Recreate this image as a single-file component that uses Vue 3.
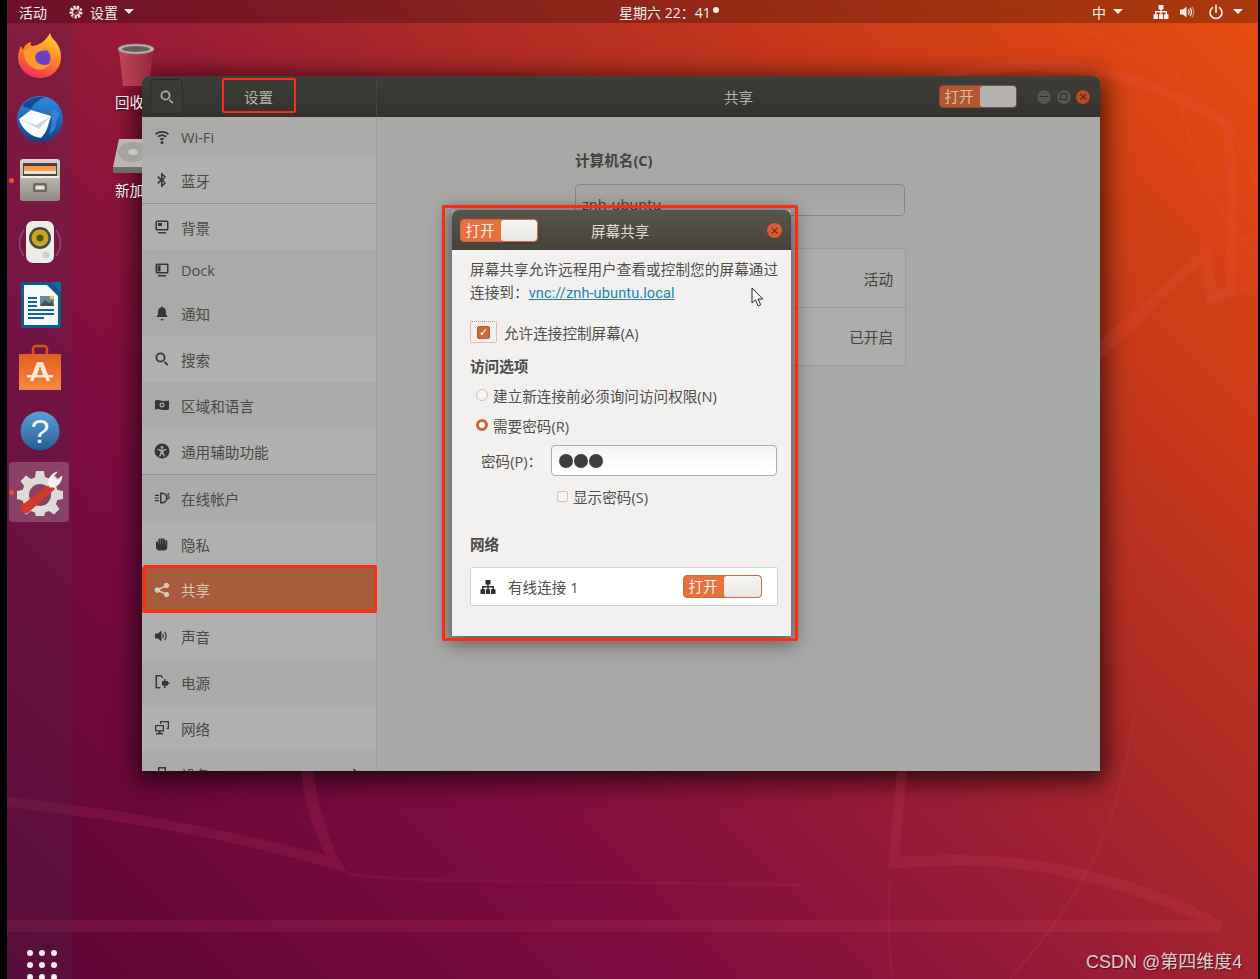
<template>
  <div class="screen">
    <div class="desktop">
      <!-- wallpaper curves -->
      <svg class="curves" viewBox="0 0 1260 979" width="1260" height="979">
        <g fill="#ff6478" fill-opacity="0.1">
          <path d="M0 920H1190L1222 922 1220 932H0Z" />
          <path d="M1222 922C1140 875 1040 855 960 855 935 855 915 856 899 857L908 760H898L888 869C920 866 960 864 990 866 1070 872 1140 895 1197 920Z" />
          <path d="M0 796C120 808 230 830 325 855 312 825 303 800 300 760H312C316 805 330 845 347 873 240 840 120 820 0 806Z" />
          <path d="M930 76C980 58 1050 55 1100 65 1150 78 1200 100 1233 122L1237 207 1236 295 1206 305 1202 262 1100 360V340L1210 243 1216 290 1226 287 1228 207 1223 128C1190 105 1150 88 1095 76 1050 68 980 70 930 82Z" />
        </g>
        <g fill="none" stroke="#ff6478" stroke-opacity="0.07" stroke-width="3">
          <path d="M1133 720C1125 790 1100 850 1085 875 1060 920 1035 950 1010 979" />
          <path d="M890 880C888 920 889 950 892 979" />
          <path d="M347 873C400 885 600 880 800 885" />
          <path d="M1000 0C1100 30 1180 70 1230 130 1245 150 1252 170 1258 190" />
          <path d="M1177 70C1180 130 1205 190 1228 220 1240 235 1250 250 1258 260" />
          <path d="M1226 250L1258 232" />
          <path d="M1206 300L1258 285" />
        </g>
      </svg>

      <header class="topbar">
        <span class="top-activities">活动</span>
        <svg class="top-gear" viewBox="0 0 16 16" width="16" height="16">
          <circle cx="8" cy="8" r="5" fill="none" stroke="#eee" stroke-width="3" stroke-dasharray="2.2 1.2" />
          <circle cx="8" cy="8" r="3.6" fill="none" stroke="#ddd" stroke-width="1.6" />
          <path d="M4 12.5L11 5l1.5 1.3L5.2 13.5z" fill="#c8402e" />
        </svg>
        <span class="top-app">设置</span>
        <i class="caret"></i>
        <span class="top-clock">星期六 22：41</span>
        <i class="clock-dot"></i>
        <span class="top-spacer"></span>
        <span class="top-ime">中</span>
        <i class="caret"></i>
        <svg class="top-net" viewBox="0 0 16 16" width="16" height="16">
          <path fill="#f2f2f2" d="M5.500 1h5v4.500H8.600V7H14v3.200h1.500V15h-4.500v-4.800h1.600V8.400H8.700v1.800h1.400V15H5.900v-4.800h1.400V8.400H3.400v1.800H5V15H.5v-4.800H2V7h5.300V5.500H5.500z" />
        </svg>
        <svg class="top-vol" viewBox="0 0 16 16" width="16" height="16">
          <path fill="#f2f2f2" d="M1 5.500h3L7.500 2.500v11L4 10.500H1z" />
          <path fill="none" stroke="#f2f2f2" stroke-width="1.2" d="M9.300 5.500c1 1.400 1 3.600 0 5M11 3.800c1.800 2.400 1.800 6 0 8.400" />
          <path fill="none" stroke="#f2f2f2" stroke-opacity="0.5" stroke-width="1.2" d="M12.800 2.600c2.400 3.200 2.400 7.600 0 10.800" />
        </svg>
        <svg class="top-power" viewBox="0 0 16 16" width="16" height="16">
          <path fill="none" stroke="#f4f4f4" stroke-width="1.6" stroke-linecap="round" d="M8 1.200v7M4.600 3.600a6 6 0 1 0 6.800 0" />
        </svg>
        <i class="caret"></i>
      </header>

      <nav class="dock">
        <div class="dock-item">
          <svg viewBox="0 0 48 48" width="48" height="48">
            <defs>
              <linearGradient id="fx1" x1="0.7" y1="0" x2="0.3" y2="1">
                <stop offset="0" stop-color="#ffd23a" />
                <stop offset="0.45" stop-color="#ff8a22" />
                <stop offset="1" stop-color="#f02a5c" />
              </linearGradient>
            </defs>
            <path fill="url(#fx1)" d="M34 2c1 4 3 6 6 9 3 4 5 9 5 15 0 12-9 21-21 21S2 38 2 26c0-5 2-9 3-11l2 4c1-4 4-7 8-8-1 3 0 4 2 4 6-1 13-5 17-13z" />
            <circle cx="24" cy="27" r="10.500" fill="#6a3fc4" />
            <path fill="#ff9a2c" d="M8 20c3-4 10-6 16-4 5 1 8 4 8 4-5-1-9 0-11 2-3 3-2 7 1 10 3 2 8 3 13 0-3 5-9 8-15 6-7-2-13-10-12-18z" />
          </svg>
        </div>
        <div class="dock-item">
          <svg viewBox="0 0 48 48" width="48" height="48">
            <defs>
              <linearGradient id="tb1" x1="0.5" y1="0" x2="0.5" y2="1">
                <stop offset="0" stop-color="#2f8fe0" />
                <stop offset="1" stop-color="#123f8c" />
              </linearGradient>
            </defs>
            <circle cx="24" cy="25" r="23" fill="url(#tb1)" />
            <path fill="#164a96" d="M6 12c5-7 16-11 24-9-6 2-12 6-15 12z" />
            <path fill="#fff" d="M3 25l12-9 20 6-4 13-2 4-4 5C16 43 6 36 3 25z" />
            <path fill="#cfd9e6" d="M3 25l17 6 15-9-12 13z" />
            <path fill="#3a7fd0" d="M36 14l8 5-3 7-2 9-6 6 3-12z" />
          </svg>
        </div>
        <div class="dock-item">
          <i class="run-dot"></i>
          <svg viewBox="0 0 48 48" width="48" height="48">
            <defs>
              <linearGradient id="cab1" x1="0" y1="0" x2="0" y2="1">
                <stop offset="0" stop-color="#dad6cf" />
                <stop offset="1" stop-color="#8f8b84" />
              </linearGradient>
            </defs>
            <rect x="4" y="3" width="40" height="42" rx="3" fill="url(#cab1)" />
            <rect x="7" y="7" width="34" height="13" fill="#4a4540" />
            <rect x="8" y="10" width="32" height="6" fill="#f59a4a" />
            <rect x="8" y="15" width="32" height="3" fill="#e8e2d4" />
            <rect x="5" y="20" width="38" height="2" fill="#f2efe9" />
            <rect x="17" y="27" width="14" height="9" rx="1.500" fill="#6e6a64" />
            <rect x="19.500" y="29.500" width="9" height="4" fill="#e5e2dc" />
          </svg>
        </div>
        <div class="dock-item">
          <svg viewBox="0 0 48 48" width="48" height="48">
            <path fill="none" stroke="#8a7ab0" stroke-opacity="0.55" stroke-width="1.500" d="M8 12c-6 8-6 18 0 26M40 12c6 8 6 18 0 26" />
            <rect x="10" y="3" width="28" height="42" rx="7" fill="#eeece6" />
            <circle cx="24" cy="20" r="11" fill="#4a4740" />
            <circle cx="24" cy="20" r="8.500" fill="#c8a818" />
            <circle cx="24" cy="20" r="3.500" fill="#5a5020" />
            <circle cx="30" cy="37" r="3.500" fill="#d2d0ca" />
          </svg>
        </div>
        <div class="dock-item">
          <svg viewBox="0 0 48 48" width="48" height="48">
            <path fill="#0f5c8c" d="M5 1h28l12 12v31a3 3 0 0 1-3 3H8a3 3 0 0 1-3-3z" />
            <path fill="#f5f7f8" d="M8 4h23l11 11v29H8z" />
            <path fill="#0f6aa0" d="M34 1h11v11z" />
            <path stroke="#1c6292" stroke-width="2" d="M12 17h9M12 21h9M12 25h9M12 29h26M12 33h26M12 37h16" />
            <rect x="24" y="15" width="14" height="10" fill="#6d8a98" />
            <path fill="#3b5563" d="M24 25l5-6 4 3 3-2 2 5z" />
            <rect x="34" y="15" width="4" height="3" fill="#e8c84c" />
          </svg>
        </div>
        <div class="dock-item">
          <svg viewBox="0 0 48 48" width="48" height="48">
            <defs>
              <linearGradient id="bag1" x1="0" y1="0" x2="0" y2="1">
                <stop offset="0" stop-color="#e0601e" />
                <stop offset="1" stop-color="#f98846" />
              </linearGradient>
            </defs>
            <path fill="none" stroke="#d4561c" stroke-width="2.500" d="M17 13V6a3 3 0 0 1 3-3h8a3 3 0 0 1 3 3v7" />
            <path fill="url(#bag1)" d="M3 11h42v36H3z" />
            <path fill="#fbe6d6" fill-rule="evenodd" d="M21 19h6l5 13h5v2.500h-4l1 3.500h-3.500l-1-3.500H18.500l-1 3.500H14l1-3.500h-4V32h5zM24 23l-3 9h6z" />
          </svg>
        </div>
        <div class="dock-item help-item">
          <svg viewBox="0 0 48 48" width="48" height="48">
            <defs>
              <linearGradient id="hp1" x1="0.5" y1="0" x2="0.5" y2="1">
                <stop offset="0" stop-color="#5c9fd8" />
                <stop offset="1" stop-color="#255c96" />
              </linearGradient>
            </defs>
            <circle cx="24" cy="24" r="19.500" fill="url(#hp1)" />
            <text x="24" y="36" class="help-mark">?</text>
          </svg>
        </div>
        <div class="dock-item active">
          <i class="run-dot"></i>
          <svg viewBox="0 0 48 48" width="48" height="48">
            <path fill="#dcdbd8" fill-rule="evenodd" d="M20 3h8l1 6 4 1.600 5-3.600 5.500 5.500-3.600 5L41.500 22l5.500 1v8l-5.500 1-1.600 4 3.600 5-5.500 5.500-5-3.600-4 1.600-1 5.500h-8l-1-5.500-4-1.600-5 3.600L4.500 41.500l3.600-5-1.600-4L1 31v-8l5.500-1 1.600-4-3.600-5L10 7.500l5 3.600 4-1.600z M24 16a11 11 0 1 0 0 22 11 11 0 0 0 0-22z" />
            <path fill="#d0392c" d="M34 16l5 5L13 44c-2.500 2-6 1.500-7.500-.5s-1.500-4.500.5-6.500z" />
            <path fill="#f2f2f0" d="M33 19c-3-6 1-14 9-15.500L37 9l3.500 3.500 5.500-5c1 6-5 13-11 12z" />
          </svg>
        </div>
        <div class="apps-grid">
          <i v-for="n in 9" :key="n"></i>
        </div>
      </nav>

      <div class="desk-icon trash">
        <svg viewBox="0 0 40 46" width="40" height="46">
          <defs>
            <linearGradient id="tr1" x1="0" y1="0" x2="1" y2="0">
              <stop offset="0" stop-color="#c04858" />
              <stop offset="1" stop-color="#93283c" />
            </linearGradient>
          </defs>
          <path fill="url(#tr1)" d="M3 8h34l-4 36H7z" />
          <ellipse cx="20" cy="7" rx="18" ry="5" fill="#b8b6b2" stroke="#8c8a86" />
          <ellipse cx="20" cy="7" rx="14" ry="3" fill="#6c5a5a" />
        </svg>
      </div>
      <div class="desk-label trash-label">回收站</div>
      <div class="desk-icon disk">
        <svg viewBox="0 0 40 36" width="40" height="36">
          <path fill="#b9b7b3" d="M6 1h32l1 28H0z" />
          <path fill="#6e6c68" d="M0 29h39v6H0z" />
          <ellipse cx="20" cy="14" rx="15" ry="10" fill="#a5a39f" />
          <ellipse cx="20" cy="14" rx="5" ry="3" fill="#c8c6c2" />
        </svg>
      </div>
      <div class="desk-label disk-label">新加卷</div>

      <section class="window">
        <div class="win-head">
          <div class="head-left">
            <button class="search-btn">
              <svg viewBox="0 0 16 16" width="16" height="16">
                <path fill="#aeaca6" fill-rule="evenodd" :d="icons.search" />
              </svg>
            </button>
            <span class="head-title">设置</span>
          </div>
          <div class="head-right">
            <span class="panel-title">共享</span>
            <div class="switch dim">
              <span>打开</span>
              <b></b>
            </div>
            <div class="win-btns">
              <i class="wbtn"><s class="w-min"></s></i>
              <i class="wbtn"><s class="w-max"></s></i>
              <i class="wbtn close">×</i>
            </div>
          </div>
        </div>
        <div class="win-body">
          <aside class="sidebar">
            <div
              v-for="item in sidebar"
              :key="item.label"
              class="side-row"
              :class="[item.size, { alt: item.alt, selected: item.selected, sep: item.sep }]"
            >
              <svg viewBox="0 0 16 16" width="16" height="16">
                <path fill="currentColor" fill-rule="evenodd" :d="icons[item.icon]" />
              </svg>
              <span>{{ item.label }}</span>
              <svg v-if="item.more" class="chev" viewBox="0 0 8 12" width="8" height="12">
                <path fill="none" stroke="currentColor" stroke-width="1.600" d="M1.500 1l5 5-5 5" />
              </svg>
            </div>
          </aside>
          <main class="panel">
            <div class="panel-label">计算机名(C)</div>
            <div class="panel-input">znh-ubuntu</div>
            <div class="panel-list">
              <div class="panel-row">活动</div>
              <div class="panel-row">已开启</div>
            </div>
          </main>
        </div>
        <div class="box-title"></div>
        <div class="box-selected"></div>
      </section>

      <div class="box-dialog"></div>
      <section class="dialog">
        <div class="dlg-head">
          <div class="switch">
            <span>打开</span>
            <b></b>
          </div>
          <span class="dlg-title">屏幕共享</span>
          <i class="dlg-close">×</i>
        </div>
        <div class="dlg-body">
          <p class="intro">屏幕共享允许远程用户查看或控制您的屏幕通过<br />连接到：<a class="link">vnc://znh-ubuntu.local</a></p>
          <div class="allow-row">
            <span class="focus-box"><i class="check on">✓</i></span>
            <span>允许连接控制屏幕(A)</span>
          </div>
          <div class="dlg-h first">访问选项</div>
          <div class="radio-row r1"><i class="radio"></i><span>建立新连接前必须询问访问权限(N)</span></div>
          <div class="radio-row r2"><i class="radio on"></i><span>需要密码(R)</span></div>
          <div class="pw-row">
            <label>密码(P)：</label>
            <div class="pw-input"><i></i><i></i><i></i></div>
          </div>
          <div class="show-row"><i class="check"></i><span>显示密码(S)</span></div>
          <div class="dlg-h second">网络</div>
          <div class="net-list">
            <svg viewBox="0 0 16 16" width="16" height="16">
              <path fill="#2e2e2e" d="M5.500 1h5v4.500H8.600V7H14v3.200h1.500V15h-4.500v-4.800h1.600V8.400H8.700v1.800h1.400V15H5.900v-4.800h1.400V8.400H3.400v1.800H5V15H.5v-4.800H2V7h5.300V5.500H5.500z" />
            </svg>
            <span class="net-name">有线连接 1</span>
            <div class="switch">
              <span>打开</span>
              <b></b>
            </div>
          </div>
        </div>
      </section>

      <svg class="pointer" viewBox="0 0 14 21" width="14" height="21">
        <path fill="#fff" stroke="#222" stroke-width="1" d="M1 1v15l3.500-3.200 2.600 6 2.600-1-2.600-5.800h4.700z" />
      </svg>

      <div class="watermark">CSDN @第四维度4</div>
    </div>
  </div>
</template>

<script setup>
const icons = {
  wifi: 'M8 2C5.200 2 2.800 3 1 4.600L2.200 6C3.700 4.700 5.800 3.800 8 3.800s4.300.9 5.800 2.200L15 4.600C13.200 3 10.800 2 8 2z M8 5.500c-1.800 0-3.400.6-4.600 1.700L4.600 8.600C5.500 7.800 6.700 7.300 8 7.300s2.500.5 3.400 1.300l1.200-1.400C11.400 6.100 9.800 5.500 8 5.500z M8 9c-.9 0-1.700.3-2.300.9L7 11.200c.3-.2.600-.4 1-.4s.7.2 1 .4l1.300-1.300C9.700 9.300 8.900 9 8 9z M8 12a1.500 1.500 0 1 1 0 3 1.500 1.500 0 0 1 0-3z',
  bluetooth: 'M7 1v5.500L4.300 4 3.200 5.200 6.200 8l-3 2.800 1.100 1.200L7 9.500V15h1l4-3.800L9.200 8 12 4.800 8 1z M8.600 3.600l1.600 1.400-1.600 1.700z M8.600 9.300l1.600 1.700-1.600 1.400z',
  background: 'M3 1.500h10A1.500 1.500 0 0 1 14.500 3v7a1.500 1.500 0 0 1-1.500 1.500H3A1.500 1.500 0 0 1 1.500 10V3A1.500 1.500 0 0 1 3 1.500z M3 3v7h10V3z M4 4h4v3H4z M4 13h8v1.500H4z',
  dock: 'M3 1.500h10A1.500 1.500 0 0 1 14.500 3v7a1.500 1.500 0 0 1-1.500 1.500H3A1.500 1.500 0 0 1 1.500 10V3A1.500 1.500 0 0 1 3 1.500z M3 3v7h10V3z M3.500 3.500h3v6h-3z M4 13h8v1.500H4z',
  bell: 'M8 1.500a1 1 0 0 1 1 1c2 .5 3 2 3 4v3l1.500 2v.5h-11v-.5L4 9.500v-3c0-2 1-3.500 3-4a1 1 0 0 1 1-1z M6.500 14h3a1.500 1.500 0 0 1-3 0z',
  search: 'M6.500 1.500a5 5 0 1 1 0 10 5 5 0 0 1 0-10z M6.500 3.300a3.200 3.200 0 1 0 0 6.400 3.200 3.200 0 0 0 0-6.400z M11 10.200l3.500 3.300-1.200 1.300-3.500-3.400z',
  region: 'M1 3.500c2-.8 4-.8 6 0s4 .8 8 0v9c-3 .8-6 .8-8 0s-4-.8-6 0z M8 5.500a2.500 2.500 0 1 0 0 5 2.500 2.500 0 0 0 0-5z M8 6.800a1.200 1.200 0 1 1 0 2.400 1.200 1.200 0 0 1 0-2.400z',
  access: 'M8 .5a7.500 7.500 0 1 1 0 15 7.500 7.500 0 0 1 0-15z M8 3a1.400 1.400 0 1 0 0 2.800A1.400 1.400 0 0 0 8 3z M3.500 5.800V7l3 .9v1.800L5 13.300l1.100.5L8 10.600l1.900 3.200 1.100-.5-1.500-3.600V7.900l3-.9V5.800L8 6.800z',
  accounts: 'M6 2.500h2a5.500 5.500 0 0 1 0 11H6z M7.500 4v8H8a4 4 0 0 0 0-8z M1 4.800h4V6H1z M.5 7.400H5v1.200H.5z M1 10h4v1.200H1z M13.500 3h2v1h-1v1.500h1V9h-2V8h1V6.500h-1z',
  privacy: 'M2 6.500a1 1 0 0 1 2 0V8h.4V3.500a1 1 0 0 1 2 0V8h.3V3a1 1 0 0 1 2 0v5h.3V3.500a1 1 0 0 1 2 0V8h.3V5a1 1 0 0 1 2 0v6c0 2.500-1.500 3.500-3.500 3.500H5.500C3 14.500 2 13 2 11z',
  share: 'M12.500.8a2.700 2.700 0 1 1-1.900 4.600L6 7.500v1l4.600 2.100a2.700 2.700 0 1 1-.7 1.500L5.200 10a2.700 2.700 0 1 1 0-4l4.700-2.100a2.700 2.700 0 0 1 2.600-3.100z',
  sound: 'M1 5.500h3L7.500 2.500v11L4 10.500H1z M9 5.500c1.300 1.300 1.300 3.700 0 5l-.8-.8c.8-.9.8-2.500 0-3.400z M11 3.500c2.300 2.300 2.300 6.700 0 9l-.8-.8c1.800-1.900 1.800-5.500 0-7.400z',
  power: 'M1.500 1h6L9.500 4H8L6.800 2.500H3v10.500h3.500v1.500h-5z M8 7h2V5h1.500v2H14v1.500h1.500V10H14v1.500h-2.500V14H10v-2.500H8z',
  network: 'M6 1h9v8h-2.500V7.700h1.200V2.300H7.300V4H6z M1 5h9v6.500H6.500V13H9v1.500H2V13h2.500v-1.500H1z M2.300 6.300v3.900h6.400V6.300z',
  devices: 'M4 1h8v4h2.500v7H12v3H4v-3H1.500V5H4z M5.500 2.500V5h5V2.500z M5.500 10.500v3h5v-3z'
}

const sidebar = [
  { label: 'Wi-Fi', icon: 'wifi', size: 'short', alt: true },
  { label: '蓝牙', icon: 'bluetooth', sep: true },
  { label: '背景', icon: 'background' },
  { label: 'Dock', icon: 'dock', size: 'short', alt: true },
  { label: '通知', icon: 'bell', alt: true },
  { label: '搜索', icon: 'search' },
  { label: '区域和语言', icon: 'region', alt: true },
  { label: '通用辅助功能', icon: 'access', sep: true },
  { label: '在线帐户', icon: 'accounts', alt: true },
  { label: '隐私', icon: 'privacy' },
  { label: '共享', icon: 'share', selected: true },
  { label: '声音', icon: 'sound' },
  { label: '电源', icon: 'power', alt: true },
  { label: '网络', icon: 'network' },
  { label: '设备', icon: 'devices', alt: true, more: true }
]
</script>

<style>
html, body {
  margin: 0;
  background: #000;
}
</style>

<style scoped>
.screen {
  width: 1260px;
  height: 979px;
  background: #000;
  position: relative;
  overflow: hidden;
  font-family: "Open Sans", "Noto Sans CJK SC", sans-serif;
  font-size: 14.6px;
}

.desktop {
  position: absolute;
  inset: 0 2px 0 7px;
  overflow: hidden;
  background: linear-gradient(225deg, #e74d10 0%, #cf3d18 18%, #ad2a26 38%, #9a1c34 50%, #7e0c40 70%, #5c0536 100%);
}

.curves {
  position: absolute;
  left: -7px;
  top: 0;
}

.topbar {
  position: relative;
  height: 23px;
  background: rgba(0, 0, 0, 0.25);
  color: #f2f0ee;
  display: flex;
  align-items: center;
  font-size: 14px;
}

.top-activities { margin-left: 12px; }
.top-gear { margin-left: 21px; }
.top-app { margin-left: 6px; }
.top-clock { margin-left: 485px; white-space: nowrap; }
.top-spacer { flex: 1; }
.top-net { margin-left: 30px; }
.top-vol { margin-left: 10px; }
.top-power { margin-left: 13px; }
.top-power + .caret { margin-right: 15px; margin-left: 9px; }
.top-ime { margin-right: 1px; }

.caret {
  width: 0;
  height: 0;
  margin-left: 6px;
  border-left: 5px solid transparent;
  border-right: 5px solid transparent;
  border-top: 5px solid #f2f0ee;
}

.clock-dot {
  width: 6px;
  height: 6px;
  margin-left: 2px;
  margin-bottom: 4px;
  border-radius: 50%;
  background: #f2f0ee;
}

.dock {
  position: absolute;
  left: 0;
  top: 23px;
  bottom: 0;
  width: 65px;
  background: rgba(72, 52, 84, 0.22);
  padding-top: 1px;
  box-sizing: border-box;
}

.dock-item {
  position: relative;
  height: 62.4px;
  display: flex;
  align-items: center;
  justify-content: center;
}

.dock-item.active::before {
  content: "";
  position: absolute;
  left: 2px;
  top: 1px;
  width: 60px;
  height: 60px;
  border-radius: 3px;
  background: rgba(255, 255, 255, 0.2);
}

.dock-item svg {
  position: relative;
}

.help-item svg {
  margin-top: 2px;
}

.run-dot {
  position: absolute;
  left: 2px;
  top: 29px;
  width: 5px;
  height: 5px;
  border-radius: 50%;
  background: #e9541d;
}

.help-mark {
  font-family: "Liberation Sans", sans-serif;
  font-size: 34px;
  font-weight: 400;
  fill: #f4f8fb;
  text-anchor: middle;
}

.apps-grid {
  position: absolute;
  left: 20px;
  top: 927px;
  display: grid;
  grid-template-columns: repeat(3, 6px);
  gap: 6px;
}

.apps-grid i {
  width: 6px;
  height: 6px;
  border-radius: 50%;
  background: #f2eef0;
}

.desk-icon {
  position: absolute;
  line-height: 0;
}

.trash { left: 109px; top: 42px; }
.disk { left: 106px; top: 138px; }

.desk-label {
  position: absolute;
  color: #f4f0f0;
  font-size: 14.5px;
  text-shadow: 0 1px 2px rgba(0, 0, 0, 0.6);
  white-space: nowrap;
}

.trash-label { left: 108px; top: 91px; }
.disk-label { left: 108px; top: 179px; }

.window {
  position: absolute;
  left: 135px;
  top: 76px;
  width: 958px;
  height: 695px;
  border-radius: 6px 6px 0 0;
  overflow: hidden;
  background: #a8a8a6;
}

.desktop::before {
  content: "";
  position: absolute;
  left: 135px;
  top: 76px;
  width: 958px;
  height: 695px;
  border-radius: 6px 6px 0 0;
  box-shadow: 0 5px 24px 5px rgba(0, 0, 0, 0.68);
}

.win-head {
  height: 41px;
  display: flex;
  background: linear-gradient(#3e3d39, #33322e);
  color: #b5b3ad;
}

.head-left {
  width: 235px;
  flex: none;
  display: flex;
  align-items: center;
  border-right: 1px solid #45443f;
  box-sizing: border-box;
  padding-left: 8px;
}

.search-btn {
  width: 33px;
  height: 35px;
  padding: 0;
  display: flex;
  align-items: center;
  justify-content: center;
  background: #3a3935;
  border: 1px solid #2b2a27;
  border-radius: 4px;
}

.head-title {
  margin-left: 61px;
}

.head-right {
  flex: 1;
  position: relative;
  display: flex;
  align-items: center;
  justify-content: flex-end;
  padding-right: 9px;
}

.panel-title {
  position: absolute;
  left: 347px;
  top: 10px;
}

.win-btns {
  display: flex;
  gap: 3.5px;
  margin-left: 11px;
  padding-left: 7px;
  height: 100%;
  align-items: center;
  border-left: 1px solid #3a3935;
}

.wbtn {
  width: 16px;
  height: 16px;
  border-radius: 50%;
  background: #55544f;
  border: 1px solid #33322e;
  box-sizing: border-box;
  display: flex;
  align-items: center;
  justify-content: center;
  color: #2c2b28;
  font-style: normal;
  font-size: 14px;
  line-height: 14px;
}

.wbtn.close {
  background: #bd4a24;
  color: #41241a;
}

.w-min {
  width: 8px;
  height: 1px;
  background: #2c2b28;
}

.w-max {
  width: 7px;
  height: 7px;
  border: 1px solid #2c2b28;
  box-sizing: border-box;
}

.win-body {
  display: flex;
  height: 654px;
}

.sidebar {
  width: 235px;
  flex: none;
  background: #b0b0af;
  border-right: 1px solid #9e9e9c;
  box-sizing: border-box;
  overflow: hidden;
  color: #4a4947;
}

.side-row {
  height: 46px;
  flex: none;
  display: flex;
  align-items: center;
  box-sizing: border-box;
  padding-left: 12px;
  gap: 11px;
  position: relative;
}

.side-row.short { height: 40px; }
.side-row.alt { background: #aaaaa9; }
.side-row.sep { border-bottom: 1px solid #8f8f8d; height: 47px; }
.side-row svg { flex: none; color: #363533; }

.side-row.selected {
  background: #a65c3c;
  color: #d8c8b8;
  border-bottom: 1px solid #a38272;
}

.side-row.selected svg { color: #d8c8b8; }

.chev {
  position: absolute;
  right: 16px;
}

.panel {
  flex: 1;
  padding: 32px 0 0 198px;
  color: #43423f;
}

.panel-label {
  font-weight: 700;
  line-height: 22px;
}

.panel-input {
  margin-top: 13px;
  width: 330px;
  height: 32px;
  box-sizing: border-box;
  border: 1px solid #85847f;
  border-radius: 4px;
  padding: 8px 6px;
  line-height: 22px;
  background: linear-gradient(#a4a4a2, #aaaaa8);
}

.panel-list {
  margin-top: 32px;
  width: 331px;
  background: #adadab;
  border: 1px solid #9a9a98;
  border-radius: 2px;
  box-sizing: border-box;
}

.panel-row {
  height: 58px;
  display: flex;
  align-items: center;
  justify-content: flex-end;
  padding-right: 12px;
  box-sizing: border-box;
}

.panel-row + .panel-row {
  border-top: 1px solid #9a9a98;
}

.box-title,
.box-selected,
.box-dialog {
  position: absolute;
  box-sizing: border-box;
  border: 2px solid #ff2a12;
  border-radius: 2px;
}

.box-title {
  left: 80px;
  top: 2px;
  width: 74px;
  height: 35px;
}

.box-selected {
  left: 1px;
  top: 489px;
  width: 234px;
  height: 48px;
  border-width: 3px;
}

.box-dialog {
  left: 435px;
  top: 205px;
  width: 356px;
  height: 436px;
  border-width: 3px;
  z-index: 2;
}

.dialog {
  position: absolute;
  left: 445px;
  top: 210px;
  width: 339px;
  height: 426px;
  border-radius: 6px 6px 0 0;
  overflow: hidden;
  background: #f2f1f0;
  color: #4f4e4b;
  z-index: 1;
}

.desktop::after {
  content: "";
  position: absolute;
  left: 445px;
  top: 210px;
  width: 339px;
  height: 426px;
  box-shadow: 0 4px 18px 4px rgba(0, 0, 0, 0.45);
}

.dlg-head {
  height: 40px;
  display: flex;
  align-items: center;
  position: relative;
  padding-left: 8px;
  color: #dedcd6;
  background: linear-gradient(#5a564b, #45423a);
}

.dlg-title {
  position: absolute;
  left: 139px;
  top: 10px;
}

.dlg-close {
  position: absolute;
  right: 9px;
  top: 13px;
  width: 15px;
  height: 15px;
  border-radius: 50%;
  background: #df5a2c;
  color: #50281a;
  font-style: normal;
  font-size: 14px;
  line-height: 15px;
  text-align: center;
}

.switch {
  width: 78px;
  height: 23px;
  flex: none;
  display: flex;
  border-radius: 4px;
  overflow: hidden;
  color: #f7efe8;
  background: #e96f3d;
  border: 1px solid #c76a45;
  box-sizing: border-box;
  font-size: 14.6px;
  line-height: 21px;
}

.switch span {
  width: 38px;
  padding-right: 2px;
  text-align: center;
}

.switch b {
  flex: 1;
  background: linear-gradient(#f6f5f3, #e9e7e4);
  border-radius: 3px;
}

.switch.dim {
  background: #b5562f;
  border-color: #7d5040;
  color: #d8c0b0;
}

.switch.dim b {
  background: #b4b3af;
}

.dlg-body {
  padding: 8px 13px 0 18px;
}

.intro {
  margin: 0;
  line-height: 23px;
  white-space: nowrap;
  letter-spacing: 0.08px;
}

.link {
  color: #1f84ac;
  text-decoration: underline;
  font-family: Roboto, sans-serif;
}

.allow-row {
  margin-top: 16px;
  height: 22px;
  display: flex;
  align-items: center;
  gap: 7px;
}

.focus-box {
  width: 27px;
  height: 22px;
  box-sizing: border-box;
  border: 1px dotted #e8805a;
  border-radius: 2px;
  display: flex;
  align-items: center;
  justify-content: center;
}

.check {
  width: 13px;
  height: 13px;
  box-sizing: border-box;
  border-radius: 2px;
  border: 1px solid #c8c6c2;
  background: #f6f5f4;
  font-style: normal;
  display: block;
}

.check.on {
  background: #d0663a;
  border-color: #bc5a34;
  color: #fff;
  font-family: "DejaVu Sans", sans-serif;
  font-size: 11px;
  font-weight: 700;
  line-height: 11px;
  text-align: center;
}

.dlg-h {
  font-weight: 700;
  line-height: 22px;
  color: #4a4946;
}

.dlg-h.first { margin-top: 12px; }
.dlg-h.second { margin-top: 26px; }

.radio-row {
  height: 22px;
  display: flex;
  align-items: center;
  gap: 5px;
  padding-left: 6px;
}

.r1 { margin-top: 7px; }
.r2 { margin-top: 8px; }

.radio {
  width: 12px;
  height: 12px;
  box-sizing: border-box;
  border-radius: 50%;
  border: 1px solid #c4c2be;
  background: #f8f7f6;
}

.radio.on {
  border: 3.500px solid #cc643c;
  background: #fff;
}

.pw-row {
  margin-top: 9px;
  height: 31px;
  display: flex;
  align-items: center;
  padding-left: 11px;
}

.pw-row label {
  width: 70px;
  flex: none;
}

.pw-input {
  width: 226px;
  height: 31px;
  box-sizing: border-box;
  border: 1px solid #aeaca8;
  border-radius: 4px;
  background: linear-gradient(#f4f4f3, #fff);
  display: flex;
  align-items: center;
  gap: 1px;
  padding-left: 7px;
}

.pw-input i {
  width: 14px;
  height: 14px;
  border-radius: 50%;
  background: #3e3d3b;
}

.show-row {
  margin-top: 9px;
  height: 22px;
  display: flex;
  align-items: center;
  gap: 5px;
  padding-left: 87px;
}

.show-row .check {
  width: 11px;
  height: 11px;
}

.net-list {
  margin-top: 12px;
  width: 308px;
  height: 39px;
  box-sizing: border-box;
  background: #fff;
  border: 1px solid #d3d1ce;
  border-radius: 2px;
  display: flex;
  align-items: center;
  padding-left: 9px;
}

.net-name {
  margin-left: 12px;
}

.net-list .switch {
  width: 79px;
  margin-left: auto;
  margin-right: 15px;
}

.pointer {
  position: absolute;
  left: 744px;
  top: 287px;
  z-index: 3;
}

.watermark {
  position: absolute;
  left: 1079px;
  top: 949px;
  color: #dccfd0;
  font-family: "Liberation Sans", "Noto Sans CJK SC", sans-serif;
  font-size: 18px;
  line-height: 26px;
  white-space: nowrap;
  text-shadow: 1px 1px 1px rgba(0, 0, 0, 0.5);
}
</style>
